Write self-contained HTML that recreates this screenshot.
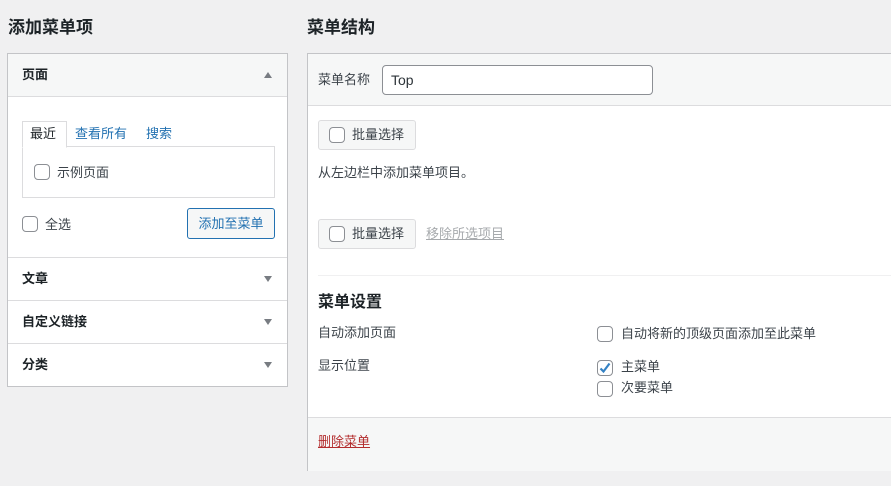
<!DOCTYPE html>
<html><head><meta charset="utf-8"><style>
*{box-sizing:border-box;margin:0;padding:0}
body{width:891px;height:486px;background:#f0f0f1;font-family:"Liberation Sans","Noto Sans CJK SC",sans-serif;font-size:13px;color:#3c434a;position:relative;overflow:hidden}
.a{position:absolute;white-space:nowrap;line-height:16px}
.h2{font-size:17px;font-weight:bold;color:#1d2327;line-height:20px}
.box{position:absolute;background:#fff;border:1px solid #c3c4c7}
.cb{position:absolute;width:16px;height:16px;border:1px solid #8c8f94;border-radius:4px;background:#fff}
.sec{position:absolute;left:0;right:0;border-top:1px solid #dcdcde;font-weight:bold;color:#1d2327;font-size:13px}
.tri{position:absolute;right:15px;width:0;height:0;border-left:4px solid transparent;border-right:4px solid transparent}
.btn{position:absolute;background:#f6f7f7;border:1px solid #dcdcde;border-radius:3px}
</style></head><body>
<div class="a h2" style="left:8px;top:18px">添加菜单项</div>
<div class="a h2" style="left:307px;top:18px">菜单结构</div>

<div class="box" style="left:7px;top:53px;width:281px;height:334px">
 <div class="a" style="left:0;top:0;width:279px;height:43px;background:#f6f7f7;border-bottom:1px solid #dcdcde"></div>
 <div class="a" style="left:14px;top:13px;font-weight:bold;color:#1d2327">页面</div>
 <div class="tri" style="top:18px;border-bottom:6px solid #787c82"></div>
 <div class="a" style="left:14px;top:92px;width:253px;height:52px;border:1px solid #dcdcde"></div>
 <div class="a" style="left:14px;top:67px;width:45px;height:27px;border:1px solid #dcdcde;border-bottom:1px solid #fff;background:#fff"></div>
 <div class="a" style="left:22px;top:72px;color:#1d2327">最近</div>
 <div class="a" style="left:67px;top:72px;color:#2271b1">查看所有</div>
 <div class="a" style="left:138px;top:72px;color:#2271b1">搜索</div>
 <div class="cb" style="left:26px;top:110px"></div>
 <div class="a" style="left:49px;top:111px">示例页面</div>
 <div class="cb" style="left:14px;top:162px"></div>
 <div class="a" style="left:37px;top:163px">全选</div>
 <div class="a" style="left:179px;top:154px;width:88px;height:31px;border:1px solid #2271b1;border-radius:3px;background:#f6f7f7;color:#2271b1;text-align:center;line-height:29px">添加至菜单</div>
 <div class="sec" style="top:203px;height:43px"><span class="a" style="left:14px;top:13px">文章</span><div class="tri" style="top:18px;border-top:6px solid #787c82"></div></div>
 <div class="sec" style="top:246px;height:43px"><span class="a" style="left:14px;top:13px">自定义链接</span><div class="tri" style="top:18px;border-top:6px solid #787c82"></div></div>
 <div class="sec" style="top:289px;height:43px"><span class="a" style="left:14px;top:13px">分类</span><div class="tri" style="top:18px;border-top:6px solid #787c82"></div></div>
</div>

<div class="box" style="left:307px;top:53px;width:600px;height:418px">
 <div class="a" style="left:0;top:0;width:600px;height:52px;background:#f6f7f7;border-bottom:1px solid #dcdcde"></div>
 <div class="a" style="left:10px;top:18px">菜单名称</div>
 <div class="a" style="left:74px;top:11px;width:271px;height:30px;border:1px solid #8c8f94;border-radius:4px;background:#fff;color:#2c3338;font-size:14px;padding-left:8px;line-height:28px">Top</div>
 <div class="btn" style="left:10px;top:66px;width:98px;height:30px"></div>
 <div class="cb" style="left:21px;top:73px"></div>
 <div class="a" style="left:44px;top:73px">批量选择</div>
 <div class="a" style="left:10px;top:111px">从左边栏中添加菜单项目。</div>
 <div class="btn" style="left:10px;top:165px;width:98px;height:30px"></div>
 <div class="cb" style="left:21px;top:172px"></div>
 <div class="a" style="left:44px;top:172px">批量选择</div>
 <div class="a" style="left:118px;top:172px;color:#a7aaad;text-decoration:underline">移除所选项目</div>
 <div class="a" style="left:10px;top:221px;width:590px;border-top:1px solid #f0f0f1"></div>
 <div class="a" style="left:10px;top:241px;font-size:16px;font-weight:bold;color:#1d2327">菜单设置</div>
 <div class="a" style="left:10px;top:271px">自动添加页面</div>
 <div class="cb" style="left:289px;top:272px"></div>
 <div class="a" style="left:313px;top:272px">自动将新的顶级页面添加至此菜单</div>
 <div class="a" style="left:10px;top:304px">显示位置</div>
 <div class="cb" style="left:289px;top:306px"><svg width="14" height="14" viewBox="0 0 14 14" style="position:absolute;left:0;top:0"><path d="M2.5 7.5 L5.5 10.5 L11.5 2.5" fill="none" stroke="#3582c4" stroke-width="2.2"/></svg></div>
 <div class="a" style="left:313px;top:305px">主菜单</div>
 <div class="cb" style="left:289px;top:327px"></div>
 <div class="a" style="left:313px;top:326px">次要菜单</div>
 <div class="a" style="left:0;top:363px;width:600px;height:54px;background:#f6f7f7;border-top:1px solid #dcdcde"></div>
 <div class="a" style="left:10px;top:380px;color:#b32d2e;text-decoration:underline">删除菜单</div>
</div>
</body></html>
